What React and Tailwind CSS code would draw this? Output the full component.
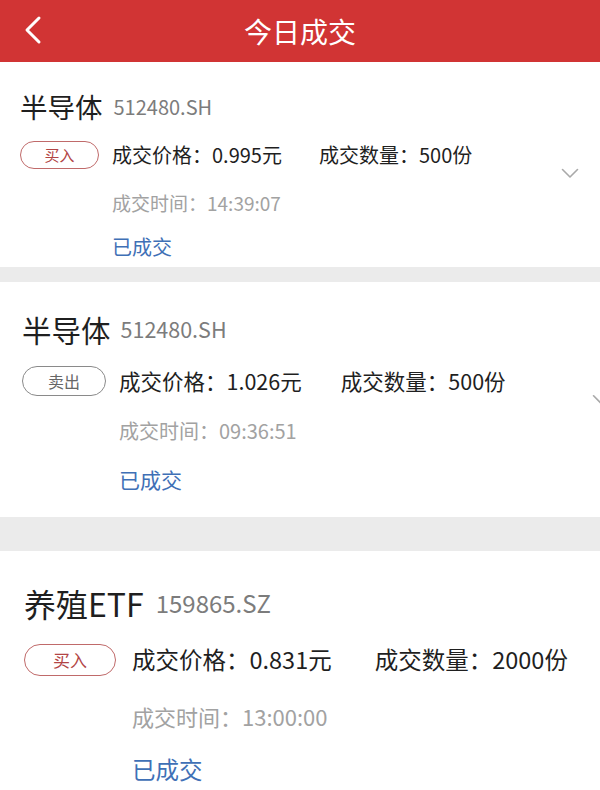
import { ChevronLeft } from 'lucide-react'

// each card was captured at a slightly different zoom, so sizes are per card
const cards = [
  {
    name: '半导体',
    code: '512480.SH',
    side: 'buy',
    price: '0.995',
    qty: '500',
    time: '14:39:07',
    box: 'h-[205px] pt-[20px] pl-[20px]',
    titleRow: 'h-[49px]',
    title: 'text-[27.5px]',
    code_: 'text-[20px] ml-[11px]',
    row: 'h-[48px]',
    lastRow: 'h-[40px]',
    badge: 'w-[79px] h-[28px] text-[15px]',
    infoGap: 'ml-[13px]',
    price_: 'text-[20px]',
    qtyGap: 'ml-[37px]',
    time_: 'text-[19px]',
    status: 'text-[20px]',
    chevron: 'left-[561px] top-[106px] w-[18px] h-[11px]',
  },
  {
    name: '半导体',
    code: '512480.SH',
    side: 'sell',
    price: '1.026',
    qty: '500',
    time: '09:36:51',
    box: 'h-[235px] pt-[20px] pl-[22px]',
    titleRow: 'h-[54px]',
    title: 'text-[29.5px]',
    code_: 'text-[21.5px] ml-[10px]',
    row: 'h-[50px]',
    lastRow: 'h-[48px]',
    badge: 'w-[84px] h-[30px] text-[16px]',
    infoGap: 'ml-[13px]',
    price_: 'text-[21.5px]',
    qtyGap: 'ml-[39px]',
    time_: 'text-[20px]',
    status: 'text-[21px]',
    chevron: 'left-[592px] top-[112px] w-[19px] h-[12px]',
  },
  {
    name: '养殖ETF',
    code: '159865.SZ',
    side: 'buy',
    price: '0.831',
    qty: '2000',
    time: '13:00:00',
    box: 'h-[245px] pt-[23px] pl-[24px]',
    titleRow: 'h-[57px]',
    title: 'text-[32px]',
    code_: 'text-[24px] ml-[12px]',
    row: 'h-[57px]',
    lastRow: 'h-[50px]',
    badge: 'w-[92px] h-[32px] text-[17px]',
    infoGap: 'ml-[16px]',
    price_: 'text-[23.5px]',
    qtyGap: 'ml-[43px]',
    time_: 'text-[22px]',
    status: 'text-[23.5px]',
    chevron: null,
  },
]

function TradeCard({ c }) {
  const buy = c.side === 'buy'
  return (
    <div className={`relative bg-white overflow-hidden ${c.box}`}>
      <div className={`flex items-center ${c.titleRow}`}>
        <span className={`text-[#1f1f1f] ${c.title}`}>{c.name}</span>
        <span className={`text-[#7c7c7c] ${c.code_}`}>{c.code}</span>
      </div>
      <div className="flex">
        <div className={`flex items-center ${c.row}`}>
          <div
            className={`flex items-center justify-center rounded-full border ${c.badge} ${
              buy ? 'border-[#c06a6a] text-[#b24545]' : 'border-[#8a8a8a] text-[#666]'
            }`}
          >
            {buy ? '买入' : '卖出'}
          </div>
        </div>
        <div className={`flex flex-col ${c.infoGap}`}>
          <div className={`flex items-center text-[#1f1f1f] ${c.row} ${c.price_}`}>
            <span>成交价格：{c.price}元</span>
            <span className={c.qtyGap}>成交数量：{c.qty}份</span>
          </div>
          <div className={`flex items-center text-[#a2a2a2] ${c.row} ${c.time_}`}>
            成交时间：{c.time}
          </div>
          <div className={`flex items-center text-[#3f70b6] ${c.lastRow} ${c.status}`}>
            已成交
          </div>
        </div>
      </div>
      {c.chevron && (
        <svg
          className={`absolute ${c.chevron}`}
          viewBox="0 0 18 11"
          fill="none"
          stroke="#a9a9a9"
          strokeWidth="1.6"
          strokeLinecap="round"
          strokeLinejoin="round"
        >
          <path d="M1.5 1.5 L9 9 L16.5 1.5" />
        </svg>
      )}
    </div>
  )
}

export default function App() {
  return (
    <div
      className="w-[600px] h-[790px] overflow-hidden bg-[#ebebeb]"
      style={{ fontFamily: '"Noto Sans CJK SC", "Noto Sans", sans-serif' }}
    >
      <div className="relative flex h-[62px] items-center justify-center bg-[#d13434]">
        <ChevronLeft className="absolute left-[9px] top-[6px] w-[48px] h-[48px] text-white" strokeWidth={1.5} />
        <h1 className="text-[28px] text-white">今日成交</h1>
      </div>
      <TradeCard c={cards[0]} />
      <div className="h-[15px]" />
      <TradeCard c={cards[1]} />
      <div className="h-[34px]" />
      <TradeCard c={cards[2]} />
    </div>
  )
}
